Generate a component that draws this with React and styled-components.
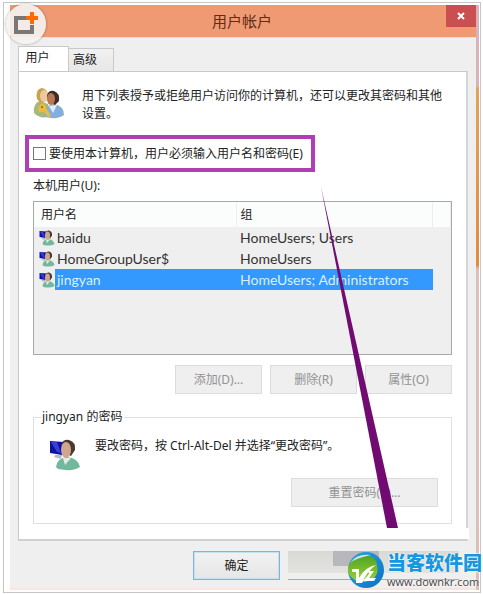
import React, {useState} from 'react';
import styled, {createGlobalStyle} from 'styled-components'


const users = [
  {name: 'baidu', group: 'HomeUsers; Users'},
  {name: 'HomeGroupUser$', group: 'HomeUsers'},
  {name: 'jingyan', group: 'HomeUsers; Administrators'},
]

const PeopleIcon = () => (
  <svg width="32" height="34" viewBox="0 0 32 34" aria-hidden="true">
    <path d="M1 26 Q0 16 7 14 L15 17 L17 29 Q8 33 1 26Z" fill="#a9b77a" />
    <path d="M11 27 Q12 18 21 17 Q31 19 31 28 Q25 33 12 30Z" fill="#84aedb" />
    <path d="M16 19 L20 26 L24 18Z" fill="#e4edf5" />
    <path d="M4 12 Q2 2 9 1 Q15 2 15 9 L13 14 Q8 18 4 12Z" fill="#c9a24a" />
    <ellipse cx="11" cy="9" rx="4" ry="6" fill="#edc9a0" />
    <path d="M14 9 Q15 3 21 4 Q27 6 26 14 L22 18 L15 14Z" fill="#3d2c29" />
    <ellipse cx="18" cy="12" rx="4" ry="6" fill="#b97952" />
    <path d="M6 25 Q4 20 8 17 Q13 17 13 21 L18 29 L15 30 L11 25Z" fill="#e9bd3c" />
    <circle cx="9" cy="20" r="1" fill="#8d6420" />
  </svg>
)

const UserIcon = ({size}) => (
  <svg width={size} height={size} viewBox="0 0 32 32" aria-hidden="true">
    <path d="M1 2 L15 3 L13 16 L1 14Z" fill="#0c12a8" />
    <path d="M2 3 L8 3 L12 14 L8 13Z" fill="#393fd4" />
    <path d="M6 16 L13 16 L12 20 L5 18Z" fill="#b6bac4" />
    <path d="M7 28 Q8 19 18 18 Q29 19 31 28 Q24 33 9 30Z" fill="#74b89c" />
    <path d="M14 19 L16 26 L22 19Z" fill="#e2eee5" />
    <path d="M12 6 Q14 0 20 1 Q27 3 26 11 L22 17 L16 14Z" fill="#493934" />
    <ellipse cx="17" cy="11" rx="5" ry="8" fill="#d0a78c" />
  </svg>
)

const App = () => {
  const [tab, setTab] = useState('users')
  const [required, setRequired] = useState(false)
  const [selected, setSelected] = useState('jingyan')

  return (<Frame>
    <GlobalStyle />

    <Window>
      <TitleBar>
        <h1>用户帐户</h1>
        <CloseButton aria-label="关闭">
          <svg width="8" height="8" viewBox="0 0 8 8">
            <path d="M1 1 L7 7 M7 1 L1 7" stroke="#fff" strokeWidth="2" />
          </svg>
        </CloseButton>
      </TitleBar>

      <Body>
        <Tabs role="tablist">
          <Tab role="tab" aria-selected={tab === 'users'} $active={tab === 'users'} onClick={() => setTab('users')}>用户</Tab>
          <Tab role="tab" aria-selected={tab === 'advanced'} $active={tab === 'advanced'} onClick={() => setTab('advanced')}>高级</Tab>
        </Tabs>

        <Panel>
          <Intro>
            <PeopleIcon />
            <p>用下列表授予或拒绝用户访问你的计算机，还可以更改其密码和其他设置。</p>
          </Intro>

          <Highlight>
            <input type="checkbox" id="required" checked={required} onChange={e => setRequired(e.target.checked)} />
            <label htmlFor="required">要使用本计算机，用户必须输入用户名和密码(E)</label>
          </Highlight>

          <ListLabel id="list-label">本机用户(U):</ListLabel>
          <ListBox>
            <UserTable aria-labelledby="list-label">
              <colgroup>
                <col className="icon" />
                <col className="name" />
                <col />
                <col className="rest" />
              </colgroup>
              <thead>
                <tr>
                  <th colSpan="2">用户名</th>
                  <th>组</th>
                  <th aria-hidden="true"></th>
                </tr>
              </thead>
              <tbody>
                {users.map(({name, group}) => (
                  <UserRow key={name} $selected={selected === name} onClick={() => setSelected(name)}>
                    <td><UserIcon size={16} /></td>
                    <td>{name}</td>
                    <td>{group}</td>
                    <td></td>
                  </UserRow>
                ))}
              </tbody>
            </UserTable>
          </ListBox>

          <Actions>
            <Button disabled>添加(D)...</Button>
            <Button disabled>删除(R)</Button>
            <Button disabled>属性(O)</Button>
          </Actions>

          <Group>
            <legend>jingyan 的密码</legend>
            <GroupRow>
              <UserIcon size={32} />
              <p>要改密码，按 Ctrl-Alt-Del 并选择“更改密码”。</p>
            </GroupRow>
            <Button disabled $wide>重置密码(P)...</Button>
          </Group>
        </Panel>

        <Footer>
          <Button $primary>确定</Button>
          <CoveredButton aria-label="取消"><span /></CoveredButton>
        </Footer>
      </Body>
    </Window>
    <Backdrop />

    <Badge>
      <svg width="26" height="24" viewBox="0 0 26 24" aria-hidden="true">
        <path d="M13 6 H3 V20 H19 V13" fill="none" stroke="#7b7774" strokeWidth="4" />
        <path d="M19 0 V12 M13 6 H25" stroke="#ff6a00" strokeWidth="4" />
      </svg>
    </Badge>

    <Arrow width="80" height="342" viewBox="0 0 80 342" aria-hidden="true">
      <path d="M0 0 L77 341 L66 341Z" fill="#710b72" />
    </Arrow>

    <Watermark>
      <svg width="38" height="38" viewBox="0 0 38 38" aria-hidden="true">
        <defs>
          <linearGradient id="ring" x1="0" y1="0" x2="1" y2="1">
            <stop offset="0" stopColor="#2ba4e4" />
            <stop offset="1" stopColor="#0a71c2" />
          </linearGradient>
          <linearGradient id="leaf" x1="0" y1="0" x2="0" y2="1">
            <stop offset="0" stopColor="#4fa321" />
            <stop offset="1" stopColor="#9bd23a" />
          </linearGradient>
        </defs>
        <circle cx="19" cy="19" r="18" fill="url(#ring)" />
        <path d="M1 22 Q0 8 15 4 Q29 4 30 14 Q33 26 21 30 Q9 34 1 22Z" fill="url(#leaf)" />
        <path d="M3 12 Q10 2 24 4 Q9 7 3 12Z" fill="#c9e5ef" />
        <path d="M5 18 H12 V27 Q18 16 29 14 Q20 20 15 32 H9 V21 H5Z" fill="#fff" />
        <path d="M21 20 H27 L22 27 H29 L27 30 H16 L22 23Z" fill="#fff" />
      </svg>
      <div>
        <strong>当客软件园</strong>
        <span>www.downkr.com</span>
      </div>
    </Watermark>
  </Frame>
  );
};

const GlobalStyle = createGlobalStyle`
  * {
    box-sizing: border-box;
  }
  body {
    margin: 0;
    padding: 2px 2px 2px 3px;
    background: #fff;
    color: #222;
    font: 12px/18px "Noto Sans", "Noto Sans CJK SC", sans-serif;
  }
  h1, p {
    margin: 0;
    font-weight: normal;
  }
  button, input {
    margin: 0;
    font: inherit;
    color: inherit;
  }
`;

const Frame = styled.div`
  position: relative;
  display: flex;
  border: 1px solid #c6c6c6;
  padding: 2px 1px 2px 6px;
`;

const Window = styled.main`
  flex: 1;
  min-width: 0;
  background: #efefef;
  border-bottom: 2px solid #fbe3df;
`;

const Backdrop = styled.div`
  width: 3px;
  background: linear-gradient(#d9b3b9 0 80px, #e3a25c 84px, #e58a3c 260px, #dcc0b8 264px);
`;

const TitleBar = styled.header`
  display: flex;
  align-items: flex-start;
  height: 33px;
  background: #f09a73;
  border-bottom: 1px solid #f7d9cc;

  h1 {
    flex: 1;
    padding-left: 28px;
    text-align: center;
    font-size: 15px;
    line-height: 32px;
    color: #5b2e20;
  }
`;

const CloseButton = styled.button`
  display: flex;
  align-items: center;
  justify-content: center;
  width: 30px;
  height: 22px;
  padding: 0;
  border: 0;
  background: #c94f50;
`;

const Body = styled.div`
  padding: 8px;
`;

const Tabs = styled.div`
  display: flex;
  align-items: flex-end;
`;

const Tab = styled.button`
  position: relative;
  height: ${p => p.$active ? 26 : 23}px;
  width: ${p => p.$active ? 51 : 45}px;
  margin-bottom: ${p => p.$active ? -1 : 0}px;
  padding: 0 12px ${p => p.$active ? 4 : 0}px 0;
  border: 1px solid #c9c9c9;
  border-bottom: 0;
  border-left-width: ${p => p.$active ? 1 : 0}px;
  background: ${p => p.$active ? '#fff' : 'linear-gradient(#f1f1f1, #e7e7e7)'};
`;

const Panel = styled.section`
  position: relative;
  padding: 15px 14px;
  border: 1px solid #c9c9c9;
  border-right: 2px solid #d4d7d9;
  border-bottom: 2px solid #d0d0d0;
  background: #fff;

  &::after {
    content: '';
    position: absolute;
    right: -3px;
    bottom: 0;
    width: 140px;
    height: 11px;
    background: #fff;
  }
`;

const Intro = styled.div`
  display: flex;
  gap: 17px;
  min-height: 48px;

  svg {
    flex: none;
  }
  p {
    flex: 1;
  }
`;

const Highlight = styled.div`
  display: flex;
  align-items: center;
  gap: 3px;
  width: fit-content;
  height: 37px;
  margin-left: -8px;
  padding: 0 8px 0 4px;
  border: 4px solid #b03fb6;

  input {
    appearance: none;
    width: 13px;
    height: 13px;
    border: 1px solid #777;
    background: #fff;
  }
  input:checked {
    background: #3399ff;
  }
`;

const ListLabel = styled.p`
  padding: 5px 0 6px;
`;

const ListBox = styled.div`
  height: 154px;
  border: 1px solid #a5a9ad;
  background: #efefef;
`;

const UserTable = styled.table`
  width: 100%;
  table-layout: fixed;
  border-collapse: collapse;
  font-family: Lato, "Noto Sans CJK SC", sans-serif;
  font-size: 14px;
  line-height: 21px;

  .icon {
    width: 21px;
  }
  .name {
    width: 181px;
  }
  .rest {
    width: 18px;
  }
  th {
    height: 25px;
    padding: 0 0 0 4px;
    border-right: 1px solid #eceef0;
    background: #fbfcfc;
    text-align: left;
    font-size: 12px;
    font-weight: normal;
  }
  th:first-child {
    padding-left: 7px;
  }
`;

const UserRow = styled.tr`
  td {
    height: 21px;
    padding: 0 0 0 4px;
    white-space: nowrap;
  }
  td:first-child {
    padding: 0 0 0 5px;
  }
  td:nth-child(2) {
    padding-left: 2px;
  }
  td:nth-child(2), td:nth-child(3) {
    background: ${p => p.$selected ? '#3399ff' : 'transparent'};
    color: ${p => p.$selected ? '#d8f0ff' : '#333'};
  }
  svg {
    display: block;
  }
`;

const Actions = styled.div`
  display: flex;
  justify-content: flex-end;
  gap: 8px;
  padding: 10px 0 14px;
`;

const Button = styled.button`
  width: ${p => p.$wide ? 147 : 87}px;
  height: 29px;
  padding: 0;
  border: 1px solid ${p => p.$primary ? '#7eb4d8' : '#dcdcdc'};
  background: ${p => p.$primary ? 'linear-gradient(#f2f2f2, #e6e6e6)' : '#efefef'};
  box-shadow: ${p => p.$primary ? 'inset 0 0 0 1px #c4e1f2' : 'none'};

  &:disabled {
    color: #929292;
  }
`;

const Group = styled.fieldset`
  display: flex;
  flex-direction: column;
  min-width: 0;
  margin: 0;
  padding: 11px 13px 16px 15px;
  border: 1px solid #e0e0e0;

  legend {
    margin-left: -8px;
    padding: 0 2px 0 1px;
  }
  > button {
    align-self: flex-end;
  }
`;

const GroupRow = styled.div`
  display: flex;
  gap: 14px;
  min-height: 41px;

  svg {
    flex: none;
    margin-top: 2px;
  }
`;

const Footer = styled.footer`
  display: flex;
  justify-content: flex-end;
  gap: 8px;
  padding: 10px 0 0;
  margin-right: 9px;
`;

const CoveredButton = styled.button`
  display: flex;
  width: 171px;
  height: 29px;
  padding: 0 0 0 45px;
  border: 0;
  border-bottom: 1px solid #aaa;
  background: linear-gradient(#d9dad5, #e2e2df 22px, #efefef 22px);

  span {
    width: 46px;
    height: 15px;
    background: #b7b7bc;
  }
`;

const Badge = styled.div`
  position: absolute;
  left: 2px;
  top: 1px;
  display: flex;
  align-items: center;
  justify-content: center;
  width: 40px;
  height: 40px;
  border-radius: 50%;
  background: rgba(245, 242, 240, .92);
  box-shadow: 0 0 3px rgba(0, 0, 0, .35);
`;

const Arrow = styled.svg`
  position: absolute;
  left: 317px;
  top: 184px;
  pointer-events: none;
`;

const Watermark = styled.div`
  position: absolute;
  right: -2px;
  bottom: 3px;
  display: flex;
  align-items: center;
  gap: 2px;
  pointer-events: none;

  div {
    display: flex;
    flex-direction: column;
  }
  strong {
    font-size: 19px;
    line-height: 24px;
    font-weight: 900;
    color: #1698df;
    text-shadow: 0 0 2px #fff, 0 0 2px #fff;
  }
  span {
    font-family: "Open Sans", sans-serif;
    font-size: 11px;
    line-height: 14px;
    color: #444;
    text-shadow: 0 0 2px #fff;
  }
`;



export default App;
